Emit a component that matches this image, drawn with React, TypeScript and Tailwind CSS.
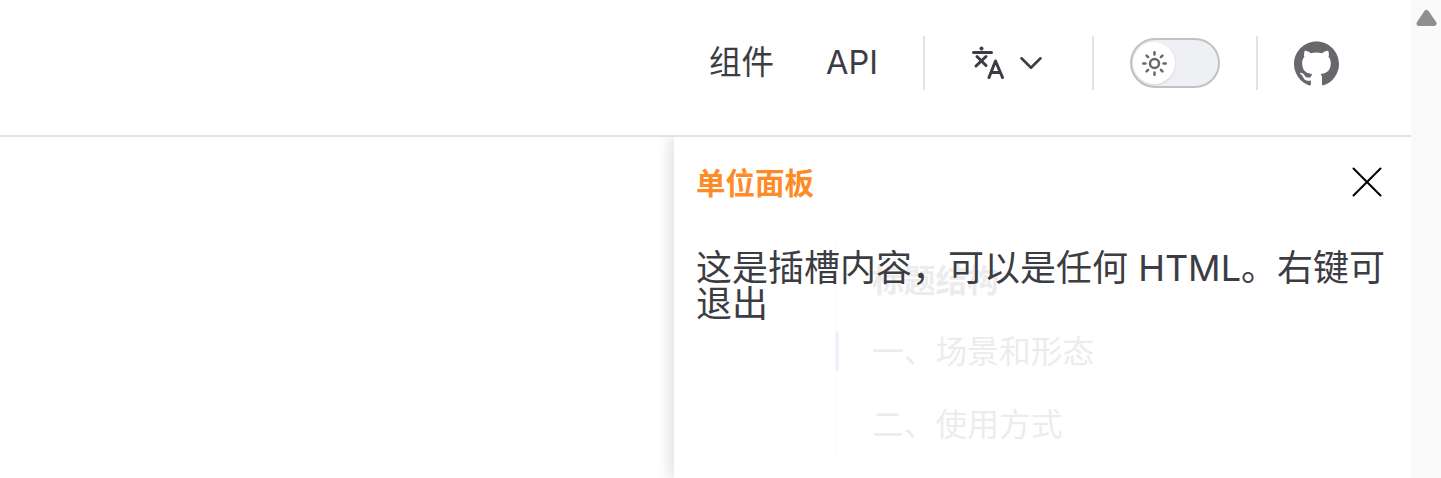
import { ChevronDown, Sun, X } from "lucide-react";

const fontStack = { fontFamily: '"Inter", "Noto Sans CJK SC", sans-serif' };

function LangIcon() {
  return (
    <svg width="34" height="34" viewBox="0 0 34 34" fill="none" stroke="#3c3c43" strokeWidth="3" strokeLinecap="round" strokeLinejoin="round">
      <circle cx="9.5" cy="2.5" r="2" fill="#3c3c43" stroke="none" />
      <path d="M1.5 6.5h18" />
      <path d="M5 10.5l9 9M14 10.5L4 20" />
      <path d="M17 31.5l6.5-16.5 7 16.5M19.5 26.5h8.5" />
    </svg>
  );
}

function GithubIcon() {
  return (
    <svg width="45" height="45" viewBox="0 0 24 24" fill="#67676c">
      <path d="M12 .297c-6.63 0-12 5.373-12 12 0 5.303 3.438 9.8 8.205 11.385.6.113.82-.258.82-.577 0-.285-.01-1.04-.015-2.04-3.338.724-4.042-1.61-4.042-1.61C4.422 18.07 3.633 17.7 3.633 17.7c-1.087-.744.084-.729.084-.729 1.205.084 1.838 1.236 1.838 1.236 1.07 1.835 2.809 1.305 3.495.998.108-.776.417-1.305.76-1.605-2.665-.3-5.466-1.332-5.466-5.93 0-1.31.465-2.38 1.235-3.22-.135-.303-.54-1.523.105-3.176 0 0 1.005-.322 3.3 1.23.96-.267 1.98-.399 3-.405 1.02.006 2.04.138 3 .405 2.28-1.552 3.285-1.23 3.285-1.23.645 1.653.24 2.873.12 3.176.765.84 1.23 1.91 1.23 3.22 0 4.61-2.805 5.625-5.475 5.92.42.36.81 1.096.81 2.22 0 1.606-.015 2.896-.015 3.286 0 .315.21.69.825.57C20.565 22.092 24 17.592 24 12.297c0-6.627-5.373-12-12-12" />
    </svg>
  );
}

function Divider() {
  return <div className="h-[54px] w-[2px] bg-[#e2e2e3]" />;
}

function Header() {
  return (
    <header className="flex h-[137px] shrink-0 items-start justify-end border-b-2 border-[#e2e2e3] pt-9 pr-[72px] text-[32.5px] leading-[54px] text-[#3c3c43]">
      <a className="mr-[52px]">组件</a>
      <a className="mr-[45px]">API</a>
      <Divider />
      <button className="mr-[42px] ml-[47px] flex h-[54px] items-center gap-[6px]">
        <LangIcon />
        <ChevronDown size={38} strokeWidth={1.6} color="#3c3c43" />
      </button>
      <Divider />
      <div className="mx-9 mt-[2px] flex h-[50px] w-[90px] items-center rounded-full border-2 border-[#c2c2c4] bg-[#eef0f4] px-[1px]">
        <span className="flex h-[42px] w-[42px] items-center justify-center rounded-full bg-white shadow-[0_1px_3px_rgba(0,0,0,0.12)]">
          <Sun size={27} strokeWidth={2.2} color="#67676c" />
        </span>
      </div>
      <Divider />
      <a className="ml-9 mt-[5px]">
        <GithubIcon />
      </a>
    </header>
  );
}

function Outline() {
  return (
    <aside className="ml-[835px] mt-[106px] w-[400px] border-l-2 border-[#e2e2e3] pl-[35px] text-[31.75px] leading-[73px] text-[#3c3c43]">
      <div className="relative">
        <p className="h-[72px] pt-[2px] leading-[72px] font-bold">标题结构</p>
        <p>一、场景和形态</p>
        <p className="h-[71px]">二、使用方式</p>
        <span className="absolute top-[88px] left-[-37px] h-10 w-1 rounded-sm bg-[#646cff]" />
      </div>
    </aside>
  );
}

function Panel() {
  return (
    <div className="absolute top-0 right-0 bottom-0 w-[737px] bg-white/90 px-[22px] pt-[26px] shadow-[-6px_0_12px_rgba(0,0,0,0.1)]">
      <div className="flex h-10 items-center justify-between">
        <span className="text-[29.5px] leading-10 font-bold text-[#ff8b26]">单位面板</span>
        <X size={54} strokeWidth={0.9} color="#000000" className="mt-[-2px] mr-[-5px]" />
      </div>
      <p className="mt-[47px] text-[36px] leading-[36px] text-[#3c3c43]">这是插槽内容，可以是任何 HTML。右键可退出</p>
    </div>
  );
}

export default function App() {
  return (
    <div className="flex h-[478px] overflow-hidden bg-white" style={fontStack}>
      <div className="flex min-w-0 flex-1 flex-col">
        <Header />
        <main className="relative flex-1 overflow-hidden">
          <Outline />
          <Panel />
        </main>
      </div>
      <div className="flex w-[30px] shrink-0 justify-center bg-[#fafafa] pt-[9px]">
        <svg width="21" height="17" viewBox="0 0 21 17" fill="#8f8f8f" stroke="#8f8f8f" strokeWidth="5" strokeLinejoin="round">
          <path d="M10.5 3.5L18 14.5H3Z" />
        </svg>
      </div>
    </div>
  );
}
